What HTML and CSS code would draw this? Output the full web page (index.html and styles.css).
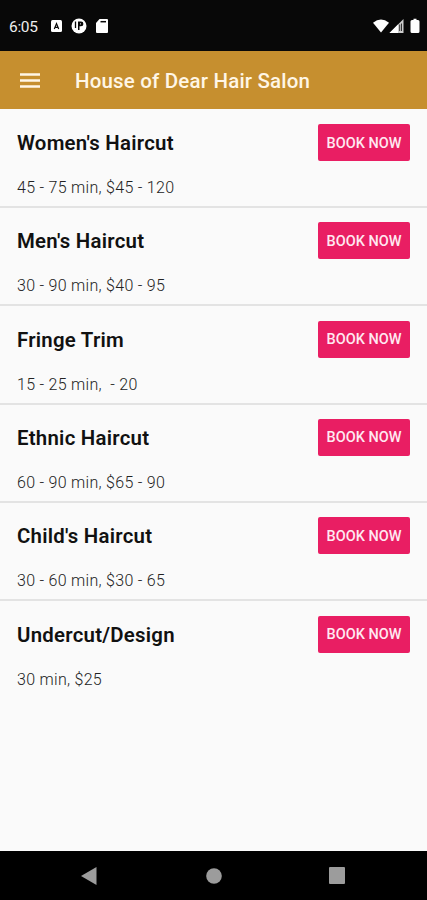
FILE: index.html
```html
<!DOCTYPE html>
<html lang="en">
<head>
    <meta charset="UTF-8">
    <meta name="viewport" content="width=device-width, initial-scale=1">
    <title>House of Dear Hair Salon</title>
    <link rel="stylesheet" href="styles.css">
</head>
<body>
    <div class="status">
        <span class="clock">6:05</span>
        <svg class="notifications" width="60" height="16" viewBox="0 0 60 16">
            <rect x="1" y="2" width="11" height="12" rx="1.5" fill="#fff"/>
            <path d="M4.3 11L6.500 5.500L8.700 11M5.500 9.300h2" fill="none" stroke="#080808" stroke-width="1.2"/>
            <circle cx="29" cy="8" r="7.5" fill="#fff"/>
            <path d="M25.500 3.500v6.500" fill="none" stroke="#080808" stroke-width="1.300"/>
            <path d="M28 3.500h3a2.400 2.400 0 0 1 0 4.800h-1.500V12H28z" fill="#080808"/>
            <path d="M30 5.900h1" stroke="#fff" stroke-width="1"/>
            <path d="M49.5 1H57q1 0 1 1v12q0 1-1 1H47q-1 0-1-1V5z" fill="#fff"/>
            <path d="M50.5 3.7H56" stroke="#080808" stroke-width="1.5"/>
        </svg>
        <svg class="signals" width="50" height="16" viewBox="0 0 50 16">
            <path d="M2 4.8Q10 -2 18 4.8L10 14.5z" fill="#fff"/>
            <path d="M18.500 15L32.500 1v14z" fill="#ccc"/>
            <path d="M18.500 15L27 6.500v8.500z" fill="#fff"/>
            <path d="M28.700 6.500v6.500M30.500 5.500v7.500" stroke="#333" stroke-width="1"/>
            <path d="M42.500 2V.8h3V2H47q1.500 0 1.500 1.500v10q0 1.500-1.500 1.500h-6q-1.500 0-1.500-1.500v-10Q39.500 2 41 2z" fill="#fff"/>
        </svg>
    </div>
    <header class="toolbar">
        <svg class="menu" width="20" height="15" viewBox="0 0 20 15">
            <path d="M0 1.500h20M0 7.500h20M0 13.500h20" stroke="#fff6e6" stroke-width="2.500"/>
        </svg>
        <h1>House of Dear Hair Salon</h1>
    </header>
    <ul class="services">
        <li>
            <div>
                <h2>Women's Haircut</h2>
                <p>45 - 75 min, $45 - 120</p>
            </div>
            <button type="button">BOOK NOW</button>
        </li>
        <li>
            <div>
                <h2>Men's Haircut</h2>
                <p>30 - 90 min, $40 - 95</p>
            </div>
            <button type="button">BOOK NOW</button>
        </li>
        <li>
            <div>
                <h2>Fringe Trim</h2>
                <p>15 - 25 min,&nbsp; - 20</p>
            </div>
            <button type="button">BOOK NOW</button>
        </li>
        <li>
            <div>
                <h2>Ethnic Haircut</h2>
                <p>60 - 90 min, $65 - 90</p>
            </div>
            <button type="button">BOOK NOW</button>
        </li>
        <li>
            <div>
                <h2>Child's Haircut</h2>
                <p>30 - 60 min, $30 - 65</p>
            </div>
            <button type="button">BOOK NOW</button>
        </li>
        <li>
            <div>
                <h2>Undercut/Design</h2>
                <p>30 min, $25</p>
            </div>
            <button type="button">BOOK NOW</button>
        </li>
    </ul>
    <nav class="navbar">
        <svg width="16" height="18" viewBox="0 0 16 18"><path d="M0 9L15.500 0v18z" fill="#9c9c9c"/></svg>
        <svg width="17" height="16" viewBox="0 0 17 16"><circle cx="9" cy="8" r="7.800" fill="#9c9c9c"/></svg>
        <svg width="16" height="17" viewBox="0 0 16 17"><rect width="16" height="17" rx="1" fill="#9c9c9c"/></svg>
    </nav>
</body>
</html>
```

FILE: styles.css
```css
* { box-sizing: border-box; }

body {
    display: flex;
    flex-direction: column;
    height: 900px;
    margin: 0;
    background: #fafafa;
    color: #111;
    font-family: Roboto, "Liberation Sans", sans-serif;
}

h1, h2, p, ul {
    margin: 0;
    padding: 0;
}

.status {
    display: flex;
    align-items: center;
    height: 51px;
    padding: 1px 6px 0 9px;
    background: #080808;
    color: #eee;
}

.clock {
    width: 41px;
    padding-top: 1px;
    font-size: 15.5px;
    letter-spacing: -0.3px;
    line-height: 18px;
}

.signals { margin-left: auto; }

.toolbar {
    display: flex;
    align-items: center;
    height: 58px;
    padding: 2px 20px 0;
    background: #c68f2f;
}

.menu { margin-top: -2px; }

.toolbar h1 {
    margin-left: 35px;
    color: #fff6e6;
    font-size: 20.5px;
    font-weight: 500;
    letter-spacing: 0.18px;
    line-height: 24px;
    white-space: nowrap;
}

.services {
    flex: 1;
    list-style: none;
}

.services li {
    display: flex;
    justify-content: space-between;
    align-items: flex-start;
    height: 98.35px;
    padding: 15px 17px 0;
    border-bottom: 2px solid #e3e3e3;
}

/* the first row carries the offset below the toolbar */
.services li:first-child {
    height: 99px;
}

.services li + li { padding-top: 14.2px; }

.services li:last-child { border-bottom: 0; }

.services h2 {
    padding-top: 7px;
    font-size: 20.4px;
    font-weight: 600;
    letter-spacing: 0.25px;
    line-height: 24px;
}

.services p {
    margin-top: 23px;
    color: #222;
    font-size: 16px;
    font-weight: 300;
    letter-spacing: 0.29px;
    line-height: 20px;
}

.services button {
    width: 92px;
    height: 37px;
    padding: 1px 0 0;
    border: 0;
    border-radius: 2px;
    background: #e91e63;
    color: #ffe9f1;
    font-family: inherit;
    font-size: 14.5px;
    font-weight: 500;
}

.navbar {
    display: flex;
    justify-content: space-between;
    align-items: center;
    height: 49px;
    padding: 0 82px 0 81px;
    background: #000;
}
```
